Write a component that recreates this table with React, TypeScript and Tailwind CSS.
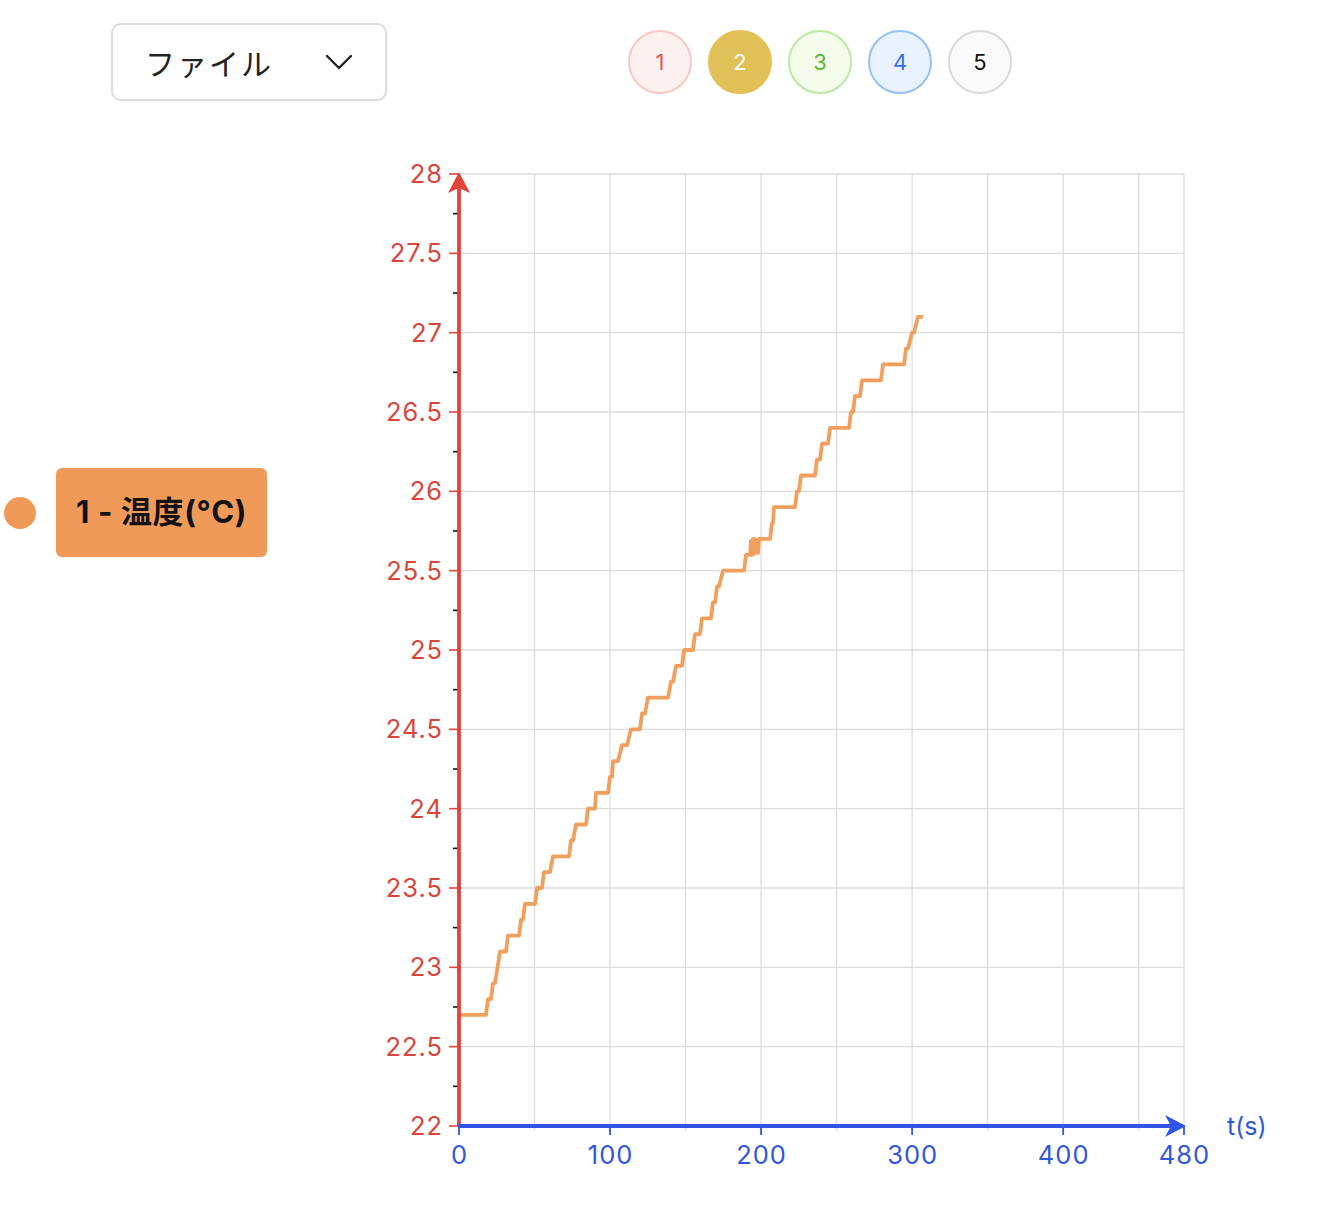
import React from "react";

const X0 = 459;
const X1 = 1184;
const Y0 = 1126;
const Y1 = 174;
const xs = (t: number) => X0 + (t / 480) * (X1 - X0);
const ys = (v: number) => Y0 - ((v - 22) / 6) * (Y0 - Y1);

const steps: [number, number, number][] = [
  [459, 486, 22.7],
  [488, 491, 22.8],
  [493, 495, 22.9],
  [500, 506, 23.1],
  [508, 519, 23.2],
  [521, 523, 23.3],
  [525, 535, 23.4],
  [537, 542, 23.5],
  [544, 550, 23.6],
  [553, 569, 23.7],
  [571, 573, 23.8],
  [576, 586, 23.9],
  [588, 595, 24.0],
  [596, 608, 24.1],
  [610, 612, 24.2],
  [613, 618, 24.3],
  [622, 627, 24.4],
  [631, 640, 24.5],
  [642, 645, 24.6],
  [648, 668, 24.7],
  [671, 673, 24.8],
  [676, 682, 24.9],
  [684, 693, 25.0],
  [695, 700, 25.1],
  [702, 711, 25.2],
  [713, 715, 25.3],
  [717, 719, 25.4],
  [723, 744, 25.5],
  [746, 750, 25.6],
];
const steps2: [number, number, number][] = [
  [760, 770, 25.7],
  [772, 773, 25.8],
  [774, 795, 25.9],
  [797, 799, 26.0],
  [801, 815, 26.1],
  [817, 820, 26.2],
  [822, 828, 26.3],
  [830, 849, 26.4],
  [851, 853, 26.5],
  [855, 860, 26.6],
  [862, 881, 26.7],
  [883, 904, 26.8],
  [906, 908, 26.9],
  [912, 914, 27.0],
  [918, 923, 27.1],
];

function buildPath() {
  const pts: string[] = [];
  steps.forEach(([a, b, v]) => {
    pts.push(`${a},${ys(v).toFixed(1)}`);
    pts.push(`${b},${ys(v).toFixed(1)}`);
  });
  const lo = ys(25.6);
  const hi = ys(25.7);
  const jit = [
    [751, hi + 2],
    [752, lo],
    [753, hi],
    [754, lo - 1],
    [755, hi],
    [756, lo - 2],
    [757, hi + 1],
    [758, lo - 2],
    [759, hi],
  ];
  jit.forEach(([x, y]) => pts.push(`${x},${y.toFixed(1)}`));
  steps2.forEach(([a, b, v]) => {
    pts.push(`${a},${ys(v).toFixed(1)}`);
    pts.push(`${b},${ys(v).toFixed(1)}`);
  });
  return pts.join(" ");
}

function Chart() {
  const vLines: number[] = [];
  for (let t = 50; t <= 450; t += 50) vLines.push(xs(t));
  vLines.push(X1);
  const hLines: number[] = [];
  for (let v = 22.5; v <= 28.001; v += 0.5) hLines.push(ys(v));
  const major: number[] = [];
  for (let i = 0; i <= 12; i++) major.push(22 + i * 0.5);
  const minor: number[] = [];
  for (let i = 0; i < 12; i++) minor.push(22.25 + i * 0.5);
  const xt = [0, 100, 200, 300, 400, 480];
  const red = "#e4433a";
  const redText = "#d8453b";
  const blue = "#2f55e6";
  const blueText = "#3157dc";
  return (
    <svg
      className="w-[900px] h-[1040px] shrink-0"
      viewBox="380 150 900 1040"
      style={{ fontFamily: "Inter, 'Noto Sans', sans-serif" }}
    >
      {vLines.map((x, i) => (
        <line key={"v" + i} x1={x} x2={x} y1={Y1} y2={Y0 + 5} stroke="#dcdcdc" strokeWidth={1.3} />
      ))}
      {hLines.map((y, i) => (
        <line key={"h" + i} x1={X0} x2={X1} y1={y} y2={y} stroke="#dcdcdc" strokeWidth={1.3} />
      ))}
      {minor.map((v, i) => (
        <line key={"m" + i} x1={453} x2={459} y1={ys(v)} y2={ys(v)} stroke="#111" strokeWidth={1.6} />
      ))}
      {major.map((v, i) => (
        <g key={"M" + i}>
          <line x1={449} x2={459} y1={ys(v)} y2={ys(v)} stroke={red} strokeWidth={1.6} />
          <text
            x={443}
            y={ys(v) + 9}
            textAnchor="end"
            fontSize={25.5}
            letterSpacing={1}
            fill={redText}
          >
            {Number.isInteger(v) ? v : v.toFixed(1)}
          </text>
        </g>
      ))}
      <polyline points={buildPath()} fill="none" stroke="#f0a05c" strokeWidth={3.8} strokeLinejoin="round" />
      {/* y axis */}
      <line x1={X0} x2={X0} y1={Y0 + 1} y2={186} stroke={red} strokeWidth={3.8} />
      <path d="M459 172 L470 193 L459 188 L448 193 Z" fill={red} />
      {/* x axis */}
      <line x1={X0 - 1} x2={1176} y1={Y0} y2={Y0} stroke={blue} strokeWidth={3.8} />
      <path d="M1186 1126 L1165 1115 L1171 1126 L1165 1137 Z" fill={blue} />
      {xt.map((t) => (
        <g key={"x" + t}>
          <line x1={xs(t)} x2={xs(t)} y1={Y0} y2={Y0 + 9} stroke={blue} strokeWidth={1.8} />
          <text x={xs(t) + 0.5} y={1164} textAnchor="middle" fontSize={25.5} letterSpacing={1} fill={blueText}>
            {t}
          </text>
        </g>
      ))}
      <text x={1227} y={1135} fontSize={25} fill={blueText}>
        t(s)
      </text>
    </svg>
  );
}

export default function App() {
  return (
    <div className="w-[1330px] h-[1216px] bg-white font-['Noto_Sans_CJK_JP','Noto_Sans',sans-serif] text-[#222]">
      <div className="flex items-start pt-[23px]">
        <div className="ml-[111px] w-[276px] h-[78px] rounded-[10px] border-2 border-[#dddddd] shadow-[0_1px_3px_rgba(0,0,0,0.06)] flex items-center justify-between pl-[32px] pr-[32px]">
          <span className="text-[30px] leading-none tracking-[2px] text-[#222]">ファイル</span>
          <svg width="28" height="18" viewBox="0 0 28 18">
            <path d="M2 3 L14 15 L26 3" fill="none" stroke="#222" strokeWidth="2.4" strokeLinecap="round" strokeLinejoin="round" />
          </svg>
        </div>
        <div className="ml-[241px] mt-[7px] flex gap-4 font-['Inter',sans-serif]">
          <div className="w-16 h-16 rounded-full border-2 border-[#f6c9c6] bg-[#fdf1f0] flex items-center justify-center text-[22px] text-[#df5a50]">1</div>
          <div className="w-16 h-16 rounded-full border-2 border-[#e1c157] bg-[#e1c157] flex items-center justify-center text-[22px] text-white">2</div>
          <div className="w-16 h-16 rounded-full border-2 border-[#bde8a4] bg-[#f4fdec] flex items-center justify-center text-[22px] text-[#5bb63c]">3</div>
          <div className="w-16 h-16 rounded-full border-2 border-[#96c1f4] bg-[#e9f3ff] flex items-center justify-center text-[22px] text-[#3c6fdf]">4</div>
          <div className="w-16 h-16 rounded-full border-2 border-[#dadada] bg-[#fafafa] flex items-center justify-center text-[22px] text-[#111]">5</div>
        </div>
      </div>
      <div className="flex mt-[49px]">
        <div className="w-[380px] shrink-0 pt-[318px] flex items-start">
          <div className="ml-[4px] mt-[29px] w-8 h-8 rounded-full bg-[#f09a5a]" />
          <div className="ml-[20px] w-[211px] h-[89px] rounded-[6px] bg-[#f09a5a] flex items-center pl-[20px] text-[31px] tracking-[0.6px] font-bold text-[#111] font-['Inter','Noto_Sans_CJK_JP',sans-serif] whitespace-nowrap">
            1 - 温度(°C)
          </div>
        </div>
        <Chart />
      </div>
    </div>
  );
}
